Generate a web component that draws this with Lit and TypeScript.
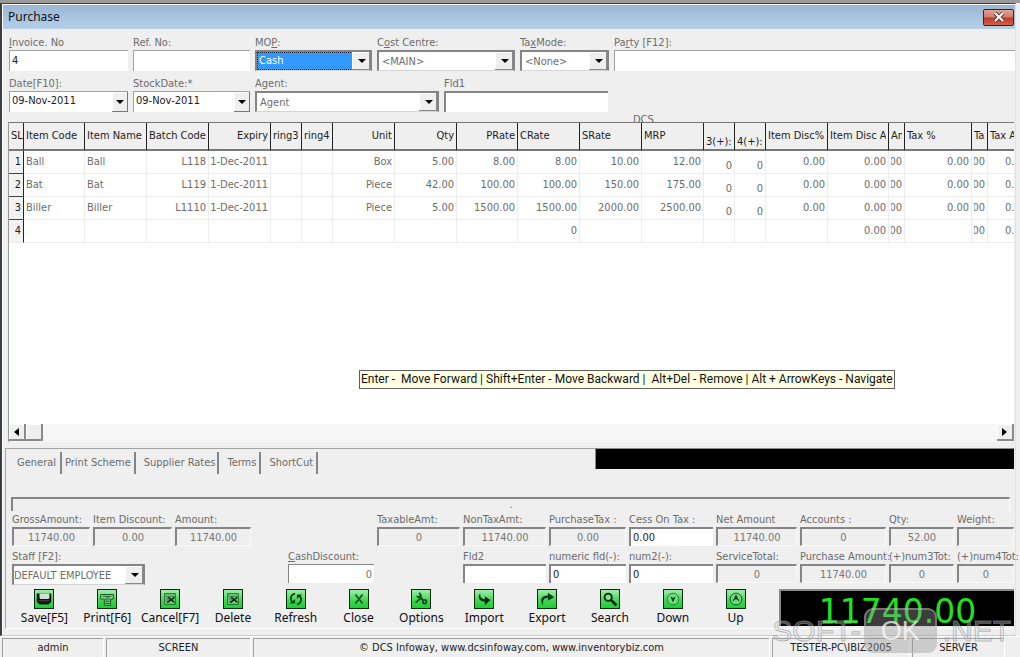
import { LitElement, html, css, svg } from "lit";
import { customElement } from "lit/decorators.js";
import { classMap } from "lit/directives/class-map.js";

type Column = { head: string; width: number; left?: boolean; headRight?: boolean; low?: boolean; clip?: boolean };

const COLUMNS: Column[] = [
  { head: "Item Code", width: 61, left: true },
  { head: "Item Name", width: 62, left: true },
  { head: "Batch Code", width: 62 },
  { head: "Expiry", width: 62, headRight: true },
  { head: "ring3", width: 31 },
  { head: "ring4", width: 31 },
  { head: "Unit", width: 62, headRight: true },
  { head: "Qty", width: 62, headRight: true },
  { head: "PRate", width: 61, headRight: true },
  { head: "CRate", width: 62 },
  { head: "SRate", width: 62 },
  { head: "MRP", width: 62 },
  { head: "3(+):", width: 31, low: true },
  { head: "4(+):", width: 31, low: true },
  { head: "Item Disc%", width: 62 },
  { head: "Item Disc Amt", width: 61, clip: true },
  { head: "Amt", width: 16, clip: true },
  { head: "Tax %", width: 67 },
  { head: "Tax", width: 16, clip: true },
  { head: "Tax Amt", width: 42 },
];

const ROWS: string[][] = [
  ["Ball", "Ball", "L118", "1-Dec-2011", "", "", "Box", "5.00", "8.00", "8.00", "10.00", "12.00", "0", "0", "0.00", "0.00", "0.00", "0.00", "0.00", "0.00"],
  ["Bat", "Bat", "L119", "1-Dec-2011", "", "", "Piece", "42.00", "100.00", "100.00", "150.00", "175.00", "0", "0", "0.00", "0.00", "0.00", "0.00", "0.00", "0.00"],
  ["Biller", "Biller", "L1110", "1-Dec-2011", "", "", "Piece", "5.00", "1500.00", "1500.00", "2000.00", "2500.00", "0", "0", "0.00", "0.00", "0.00", "0.00", "0.00", "0.00"],
  ["", "", "", "", "", "", "", "", "", "0", "", "", "", "", "", "0.00", "0.00", "", "0.00", "0.00"],
];

const ICONS: Record<string, unknown> = {
  save: svg`<path d="M2 4h16v9l-3 3H5l-3-3z" fill="#111"/><path d="M5 4h11v5l-1 1H6l-1-1z" fill="#cfe0d0"/><path d="M4 12h12" stroke="#555"/>`,
  print: svg`<path d="M3 5h14v5h-3v7H7v-7H3z" fill="#8fdf9a" stroke="#0d4a16"/><path d="M5 7h10M8 9h5M8 11h5M8 13h5M8 15h5" stroke="#0d4a16"/>`,
  cancel: svg`<path d="M4 4h12v12H4z" fill="#74c77f" stroke="#1b6a26"/><path d="M5 7h10M6 9h5M6 13h3M6 11h8" stroke="#2b7a36"/><path d="M8 8l7 6M15 8l-4 3-4 3" fill="none" stroke="#08240c" stroke-width="1.5"/>`,
  refresh: svg`<path d="M9 4C4 5 3 10 6 14M11 16c5-1 6-6 3-10" fill="none" stroke="#0c4815" stroke-width="2"/><path d="M3 15h6v-5zM17 5h-6v5z" fill="#0c4815"/>`,
  close: svg`<path d="M6 5l8 10M14 5L6 15" fill="none" stroke="#115a1c" stroke-width="2"/>`,
  options: svg`<path d="M8 3l2 3-2 2-3-1M9 8l4 4M11 8l-7 6" fill="none" stroke="#114f1b" stroke-width="2"/><circle cx="14" cy="13" r="2" fill="none" stroke="#114f1b" stroke-width="2"/>`,
  import: svg`<path d="M6 3c-4 5-1 10 5 10v4l6-6-6-4v3C7 10 5 7 6 3z" fill="#0a2b0e"/>`,
  export: svg`<path d="M6 17C1 11 4 6 11 6V3l7 5-7 4V9c-5 0-6 3-5 8z" fill="#0b4114"/>`,
  search: svg`<circle cx="8" cy="8" r="4" fill="#7fe58b" stroke="#06200a" stroke-width="2"/><path d="M11 11l6 6" stroke="#06200a" stroke-width="3"/>`,
  down: svg`<circle cx="10" cy="10" r="6.5" fill="#6fdc7c" stroke="#1b7a2a"/><path d="M7 7l3 7 3-7-3 2z" fill="#0b4114"/>`,
  up: svg`<circle cx="10" cy="10" r="6.5" fill="#6fdc7c" stroke="#0f4f1a"/><path d="M6 13l4-8 4 8-4-3z" fill="#0b4114"/>`,
};

const ACTIONS: [string, string][] = [
  ["save", "Save[F5]"], ["print", "Print[F6]"], ["cancel", "Cancel[F7]"], ["cancel", "Delete"],
  ["refresh", "Refresh"], ["close", "Close"], ["options", "Options"], ["import", "Import"],
  ["export", "Export"], ["search", "Search"], ["down", "Down"], ["up", "Up"],
];

@customElement("app-root")
export class AppRoot extends LitElement {
  static styles = css`
    :host {
      display: block;
      font: 11px/14px "DejaVu Sans Condensed", "DejaVu Sans", sans-serif;
      font-stretch: condensed;
      color: #6c6c6c;
    }
    * { box-sizing: border-box; }
    input, select, button { font: inherit; color: inherit; margin: 0; padding: 0; border: 0; border-radius: 0; outline: 0; min-width: 0; background: none; }
    .desk { position: relative; display: flex; flex-direction: column; min-height: 100vh; overflow: hidden; background: #efefef; border-top: 3px solid #9b9b9b; }
    .frame { flex: 1; display: flex; flex-direction: column; border: solid #3a3f44; border-width: 1px 0 0 2px; box-shadow: inset 1px 1px 0 #fff; margin-right: 4px; border-right: 1px solid #dfe3e8; border-bottom: 1px solid #b9cfe4; }
    .title { display: flex; justify-content: space-between; align-items: center; height: 24px; margin: 1px 0 0 1px; padding: 0 1px 0 5px; background: linear-gradient(#9ab5d1, #a9c4df 50%, #b5cfe8); color: #111; font: 12px/16px "Noto Sans", sans-serif; }
    .title h1 { margin: 0; font: inherit; }
    .title button { flex: none; }
    .exit { display: grid; place-items: center; width: 31px; height: 17px; border: 1px solid #4b1a1c; border-radius: 2px; background: linear-gradient(#e3a394, #d4796b 48%, #b93a28 52%, #d2614b); }
    .form { display: flex; flex-direction: column; gap: 6px; padding: 7px 0 0 7px; }
    .line { display: flex; gap: 5px; }
    .field { display: flex; flex-direction: column; min-width: 0; }
    .field label { white-space: nowrap; height: 14px; }
    .w89 { width: 89px; } .w117 { width: 117px; } .w119 { width: 119px; } .w138 { width: 138px; } .w164 { width: 164px; } .w184 { width: 184px; }
    .grow { flex: 1; }
    .box { width: 100%; height: 21px; padding: 0 2px 2px; background: #fff; border: solid #a0a0a0; border-width: 1px 0 0 1px; color: #222; }
    .box.deep { border: solid #858585; border-width: 2px 0 0 2px; }
    .combo { position: relative; display: flex; height: 21px; background: #fff; border: 2px solid #858585; border-bottom: 1px solid #d5d5d5; }
    .combo select { flex: 1; appearance: none; padding: 1px 18px 0 3px; text-overflow: clip; }
    .combo::after { content: ""; position: absolute; right: 0; top: 0; bottom: 0; width: 17px; pointer-events: none; background: #efefef; border: solid #8a8a8a; border-width: 0 1px 1px 0; box-shadow: inset 1px 1px 0 #fff; }
    .combo::before, .pick::before { content: ""; border: 4px solid transparent; border-top-color: #000; border-bottom: 0; }
    .combo::before { position: absolute; z-index: 1; right: 4px; top: 7px; pointer-events: none; }
    .combo.hot select { background: #3399ff; color: #fff; margin-right: 17px; padding: 0 1px; border: 1px dotted #1c2c40; }
    .date { display: flex; height: 21px; background: #fff; border: solid #a0a0a0; border-width: 1px 0 0 1px; color: #222; }
    .date input { flex: 1; padding: 0 2px 2px; }
    .pick { display: grid; place-items: center; width: 16px; background: #efefef; border: solid #777; border-width: 0 1px 1px 0; box-shadow: inset 1px 1px 0 #fff; }
    .tag { height: 10px; overflow: hidden; padding: 1px 0 0 631px; }
    .grid { display: flex; flex-direction: column; flex: 1; position: relative; margin: 0 1px 0 6px; background: #fff; overflow: hidden; border-top: 1px solid #777; border-left: 1px solid #999; }
    table { border-collapse: separate; border-spacing: 0; table-layout: fixed; width: 0; }
    th, td { height: 23px; padding: 0 2px; border: solid #ededed; border-width: 0 1px 1px 0; font-weight: normal; text-align: left; }
    thead th { height: 28px; background: #efefef; color: #222; border-color: #222; border-bottom: 2px solid #777; }
    tbody th { background: #f2f2f2; color: #222; border-color: #444; border-right-color: #222; }
    tbody tr:last-child th { border-bottom-color: #ededed; }
    .cell { display: flex; justify-content: flex-end; white-space: nowrap; }
    .cell.left { justify-content: flex-start; }
    .clip .cell { overflow: hidden; }
    td.low { padding-top: 8px; }
    th.low { padding-top: 12px; }
    .c-sl { width: 15px; }
    .hint { position: absolute; left: 350px; top: 247px; border: 1px solid #5f5f5f; background: #ffffe1; color: #111; font: 12px/17px Roboto, sans-serif; white-space: pre; padding: 0 1px; }
    .scroll { display: flex; margin-top: auto; height: 18px; background: #f6f6f6; }
    .scroll button, .thumb { display: grid; place-items: center; width: 17px; height: 17px; background: #efefef; border: solid #8a8a8a; border-width: 0 2px 2px 0; box-shadow: inset 1px 1px 0 #fff; }
    .scroll button:last-child { margin-left: auto; }
    .panel { margin: 6px 1px 6px 3px; border: solid #a4a4a4; border-width: 1px 0 0 1px; border-bottom: 1px solid #fff; }
    .tabrow { display: flex; justify-content: space-between; height: 48px; }
    .tabs { display: flex; padding-top: 3px; }
    .tabs button { height: 22px; padding: 0 3px 0 8px; border-right: 2px solid #858585; white-space: nowrap; }
    .tabs button:nth-child(1) { padding: 0 4px 0 11px; }
    .tabs button:nth-child(2) { padding: 0 3px; }
    .tabs button:nth-child(3) { padding: 0 2px 0 8px; }
    .strip { width: 419px; height: 21px; background: #000; border: solid #888; border-width: 1px 0 0 1px; margin-top: -1px; }
    .remark { display: block; width: calc(100% - 9px); height: 14px; margin-left: 5px; padding: 0; border: solid #858585; border-width: 2px 0 0 2px; border-right: 1px solid #fff; text-align: center; }
    .totals { display: grid; grid-template-columns: 78px 79px 76px 1fr 86px 83px 83px 77px 84px 81px 86px 65px 57px; gap: 4px 3px; padding: 2px 0 0 6px; }
    .totals .box { height: 19px; border: solid #858585; border-width: 2px 0 0 2px; padding: 0 2px; }
    .totals .box[readonly] { background: #efefef; color: #777; text-align: center; border-right: 1px solid #fafafa; border-bottom: 1px solid #fafafa; }
    .totals .box.num { text-align: right; color: #777; border-width: 1px 0 0 1px; }
    .c5 { grid-column: 5; } .c6 { grid-column: 6; } .c7 { grid-column: 7; }
    .staff { grid-column: 1 / 3; width: 133px; }
    .staff select { padding-left: 0; }
    .foot { display: flex; justify-content: space-between; padding: 4px 0 2px 7px; }
    .tools { display: grid; grid-template-columns: repeat(12, minmax(0, 1fr)); flex: 1; max-width: 754px; }
    .tool { display: flex; flex-direction: column; align-items: center; gap: 1px; color: #111; font: 12px/16px "Noto Sans", sans-serif; white-space: nowrap; }
    .tool svg { width: 20px; height: 20px; border: 1px solid #0a2a0d; background: linear-gradient(#a3eeae, #46d558 55%, #19cf31); }
    .led { width: 235px; height: 37px; background: #000; border: solid #888; border-width: 2px 0 0 2px; color: #1ee31e; font: 33px/42px "DejaVu Sans", sans-serif; text-align: center; overflow: hidden; }
    .status { display: grid; grid-template-columns: 101px 144px 1fr 137px 92px; gap: 3px; height: 21px; padding: 1px 16px 0 2px; background: #efefef; color: #222; border-top: 1px solid #fff; }
    .status span { display: block; text-align: center; line-height: 18px; white-space: nowrap; border: solid #a0a0a0; border-width: 1px 0 0 1px; box-shadow: 1px 0 0 #fff; }
    .mark { position: absolute; right: 9px; bottom: 4px; display: flex; align-items: center; pointer-events: none; font: 30px/44px "Liberation Sans", sans-serif; color: rgba(225, 225, 225, 0.3); -webkit-text-stroke: 1px rgba(150, 150, 150, 0.6); }
    .mark b { font-weight: normal; font-size: 27px; line-height: 42px; width: 73px; height: 45px; margin: 0 6px 0 3px; text-align: center; border-radius: 9px; background: rgba(150, 150, 150, 0.4); border: 2px solid rgba(200, 200, 200, 0.4); color: rgba(250, 250, 250, 0.75); -webkit-text-stroke: 0; }
  `;

  private total(id: string, label: unknown, value = "", opts: { open?: boolean; num?: boolean; at?: string } = {}) {
    return html`<div class="field ${opts.at ?? ""}">
      <label for=${id}>${label}</label>
      <input id=${id} class=${classMap({ box: true, num: !!opts.num })} .value=${value} ?readonly=${!opts.open} />
    </div>`;
  }

  private combo(id: string, label: unknown, value: string, width: string, hot = false) {
    return html`<div class="field ${width}">
      <label for=${id}>${label}</label>
      <div class=${classMap({ combo: true, hot })}><select id=${id}><option>${value}</option></select></div>
    </div>`;
  }

  private date(id: string, label: string, width: string) {
    return html`<div class="field ${width}">
      <label for=${id}>${label}</label>
      <div class="date"><input id=${id} .value=${"09-Nov-2011"} /><button class="pick" aria-label="Open calendar"></button></div>
    </div>`;
  }

  render() {
    return html`<div class="desk">
      <main class="frame">
        <header class="title">
          <h1>Purchase</h1>
          <button class="exit" aria-label="Close window">
            <svg width="12" height="10" viewBox="0 0 12 10"><path d="M2 1l8 8M10 1L2 9" stroke="#5b3a3c" stroke-width="4"/><path d="M2 1l8 8M10 1L2 9" stroke="#fff" stroke-width="2"/></svg>
          </button>
        </header>

        <section class="form">
          <div class="line">
            <div class="field w119"><label for="inv"><u>I</u>nvoice. No</label><input id="inv" class="box" .value=${"4"} /></div>
            <div class="field w117"><label for="ref">Ref. No:</label><input id="ref" class="box" /></div>
            ${this.combo("mop", html`MO<u>P</u>:`, "Cash", "w117", true)}
            ${this.combo("cost", html`C<u>o</u>st Centre:`, "<MAIN>", "w138")}
            ${this.combo("taxmode", html`Ta<u>x</u>Mode:`, "<None>", "w89")}
            <div class="field grow"><label for="party">Pa<u>r</u>ty [F12]:</label><input id="party" class="box" /></div>
          </div>
          <div class="line">
            ${this.date("date", "Date[F10]:", "w119")}
            ${this.date("stock", "StockDate:*", "w117")}
            ${this.combo("agent", "Agent:", "Agent", "w184")}
            <div class="field w164"><label for="fld1">Fld1</label><input id="fld1" class="box deep" /></div>
          </div>
        </section>
        <div class="tag">DCS</div>

        <section class="grid">
          <table>
            <colgroup><col class="c-sl" />${COLUMNS.map((c) => html`<col style="width:${c.width}px" />`)}</colgroup>
            <thead><tr>
              <th><div class="cell left">SL</div></th>
              ${COLUMNS.map((c) => html`<th class=${classMap({ low: !!c.low, clip: !!c.clip })}><div class=${classMap({ cell: true, left: !c.headRight })}>${c.head}</div></th>`)}
            </tr></thead>
            <tbody>
              ${ROWS.map((r, i) => html`<tr>
                <th><div class="cell">${i + 1}</div></th>
                ${r.map((v, k) => html`<td class=${classMap({ low: !!COLUMNS[k].low, clip: !!COLUMNS[k].clip })}><div class=${classMap({ cell: true, left: !!COLUMNS[k].left })}>${v}</div></td>`)}
              </tr>`)}
            </tbody>
          </table>
          <div class="hint">Enter -  Move Forward | Shift+Enter - Move Backward |  Alt+Del - Remove | Alt + ArrowKeys - Navigate</div>
          <div class="scroll">
            <button aria-label="Scroll left"><svg width="5" height="8"><path d="M5 0v8L0 4z"/></svg></button>
            <div class="thumb"></div>
            <button aria-label="Scroll right"><svg width="5" height="8"><path d="M0 0v8l5-4z"/></svg></button>
          </div>
        </section>

        <section class="panel">
          <div class="tabrow">
            <nav class="tabs">${["General", "Print Scheme", "Supplier Rates", "Terms", "ShortCut"].map((t) => html`<button>${t}</button>`)}</nav>
            <div class="strip"></div>
          </div>
          <input class="remark" aria-label="Remarks" .value=${"."} />
          <div class="totals">
            ${this.total("gross", "GrossAmount:", "11740.00")}
            ${this.total("idisc", "Item Discount:", "0.00")}
            ${this.total("amount", "Amount:", "11740.00")}
            ${this.total("taxable", "TaxableAmt:", "0", { at: "c6" })}
            ${this.total("nontax", "NonTaxAmt:", "11740.00")}
            ${this.total("ptax", "PurchaseTax :", "0.00")}
            ${this.total("cess", "Cess On Tax :", "0.00", { open: true })}
            ${this.total("net", "Net Amount", "11740.00")}
            ${this.total("acc", "Accounts :", "0")}
            ${this.total("qty", "Qty:", "52.00")}
            ${this.total("weight", "Weight:")}
            ${this.combo("staff", "Staff [F2]:", "DEFAULT EMPLOYEE", "staff")}
            ${this.total("cash", html`<u>C</u>ashDiscount:`, "0", { open: true, num: true, at: "c5" })}
            ${this.total("fld2", "Fld2", "", { open: true, at: "c7" })}
            ${this.total("numf", "numeric fld(-):", "0", { open: true })}
            ${this.total("num2", "num2(-):", "0", { open: true })}
            ${this.total("service", "ServiceTotal:", "0")}
            ${this.total("purchase", "Purchase Amount:", "11740.00")}
            ${this.total("num3", "(+)num3Tot:", "0")}
            ${this.total("num4", "(+)num4Tot:", "0")}
          </div>
          <div class="foot">
            <div class="tools">
              ${ACTIONS.map(([icon, label]) => html`<button class="tool"><svg viewBox="0 0 20 20">${ICONS[icon]}</svg>${label}</button>`)}
            </div>
            <output class="led">11740.00</output>
          </div>
        </section>
      </main>
      <footer class="status">
        <span>admin</span><span>SCREEN</span><span>© DCS Infoway, www.dcsinfoway.com, www.inventorybiz.com</span><span>TESTER-PC\\IBIZ2005</span><span>SERVER</span>
      </footer>
      <div class="mark">SOFT-<b>OK</b>.NET</div>
    </div>`;
  }
}
